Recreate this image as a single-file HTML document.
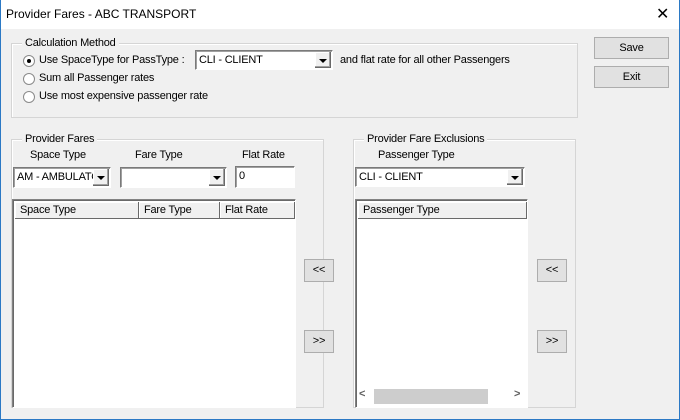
<!DOCTYPE html>
<html><head><style>
*{box-sizing:border-box;margin:0;padding:0}
body{width:680px;height:420px;overflow:hidden;font-family:"Liberation Sans",sans-serif;font-size:11px;letter-spacing:-0.2px;color:#000;background:#fff;position:relative}
.a{position:absolute}
.win{left:0;top:0;width:680px;height:420px;border:1px solid #2b79c5;border-top:none}
.body{left:1px;top:29px;width:678px;height:390px;background:#f0f0f0}
.grp{border:1px solid #d5d5d5;box-shadow:inset 1px 1px 0 #fff}
.lg{background:#f0f0f0;padding:0 3px;white-space:nowrap}
.btn{background:#e1e1e1;border:1px solid #adadad;text-align:center;font-size:11px}
.combo{background:#fff;border:1px solid #7a7a7a;border-right-color:#fff;border-bottom-color:#fff;box-shadow:inset 1px 1px 0 #a0a0a0;font-size:11px;padding:3px 0 0 3px;white-space:nowrap;overflow:hidden}
.dd{position:absolute;z-index:2;right:1px;top:1px;bottom:1px;width:16px;background:#f0f0f0;border-right:1px solid #696969;border-bottom:1px solid #696969;box-shadow:inset -1px -1px 0 #a0a0a0, inset 1px 1px 0 #fff}
.dd:after{content:"";position:absolute;left:4px;top:7px;border:4px solid transparent;border-top:4px solid #000;border-bottom:0}
.rad{width:12px;height:12px;border-radius:50%;background:#fff;border:1px solid #8a8a8a}
.list{background:#fff;border:1px solid #828282;border-right-color:#fff;border-bottom-color:#fff;box-shadow:inset 1px 1px 0 #696969}
.hd{background:#f0f0f0;border-right:1px solid #696969;border-bottom:1px solid #696969;box-shadow:inset 1px 1px 0 #fff;padding:2px 0 0 5px;height:17px;top:2px}
</style></head><body>
<div class="a win"></div>
<div class="a" style="left:6px;top:7px;font-size:12px;letter-spacing:0">Provider Fares - ABC TRANSPORT</div>
<div class="a" style="left:656px;top:4px;font-size:16px">✕</div>
<div class="a body"></div>

<div class="a grp" style="left:11px;top:43px;width:567px;height:75px"></div>
<div class="a lg" style="left:22px;top:37px">Calculation Method</div>
<div class="a rad" style="left:23px;top:55px"></div><div class="a" style="left:27px;top:59px;width:4px;height:4px;border-radius:50%;background:#000"></div>
<div class="a" style="left:39px;top:54px">Use SpaceType for PassType :</div>
<div class="a combo" style="left:195px;top:50px;width:138px;height:20px">CLI - CLIENT<div class="dd"></div></div>
<div class="a" style="left:340px;top:54px">and flat rate for all other Passengers</div>
<div class="a rad" style="left:23px;top:73px"></div><div class="a" style="left:39px;top:72px">Sum all Passenger rates</div>
<div class="a rad" style="left:23px;top:91px"></div><div class="a" style="left:39px;top:90px">Use most expensive passenger rate</div>

<div class="a btn" style="left:594px;top:37px;width:75px;height:22px;line-height:20px">Save</div>
<div class="a btn" style="left:594px;top:66px;width:75px;height:22px;line-height:20px">Exit</div>

<div class="a grp" style="left:11px;top:139px;width:313px;height:269px"></div>
<div class="a lg" style="left:22px;top:133px">Provider Fares</div>
<div class="a" style="left:30px;top:149px">Space Type</div>
<div class="a" style="left:135px;top:149px">Fare Type</div>
<div class="a" style="left:242px;top:149px">Flat Rate</div>
<div class="a combo" style="left:13px;top:167px;width:98px;height:21px"><span style="display:block;width:77px;overflow:hidden">AM - AMBULATORY</span><div class="dd"></div></div>
<div class="a combo" style="left:120px;top:167px;width:107px;height:21px"><div class="dd"></div></div>
<div class="a combo" style="left:235px;top:166px;width:60px;height:22px">0</div>
<div class="a list" style="left:12px;top:199px;width:284px;height:209px">
<div class="a hd" style="left:2px;width:124px">Space Type</div>
<div class="a hd" style="left:126px;width:81px">Fare Type</div>
<div class="a hd" style="left:207px;width:75px">Flat Rate</div>
</div>
<div class="a btn" style="left:304px;top:259px;width:30px;height:23px;line-height:21px">&lt;&lt;</div>
<div class="a btn" style="left:304px;top:330px;width:30px;height:23px;line-height:21px">&gt;&gt;</div>

<div class="a grp" style="left:353px;top:139px;width:223px;height:269px"></div>
<div class="a lg" style="left:364px;top:133px">Provider Fare Exclusions</div>
<div class="a" style="left:378px;top:149px">Passenger Type</div>
<div class="a combo" style="left:355px;top:167px;width:170px;height:20px">CLI - CLIENT<div class="dd"></div></div>
<div class="a list" style="left:355px;top:199px;width:173px;height:209px">
<div class="a hd" style="left:2px;width:169px">Passenger Type</div>
<div class="a" style="left:18px;top:189px;width:114px;height:15px;background:#cdcdcd"></div>
<div class="a" style="left:3px;top:188px;font-size:11px;color:#606060;font-weight:bold">&lt;</div>
<div class="a" style="left:158px;top:188px;font-size:11px;color:#606060;font-weight:bold">&gt;</div>
</div>
<div class="a btn" style="left:537px;top:259px;width:30px;height:23px;line-height:21px">&lt;&lt;</div>
<div class="a btn" style="left:537px;top:330px;width:30px;height:23px;line-height:21px">&gt;&gt;</div>
</body></html>
